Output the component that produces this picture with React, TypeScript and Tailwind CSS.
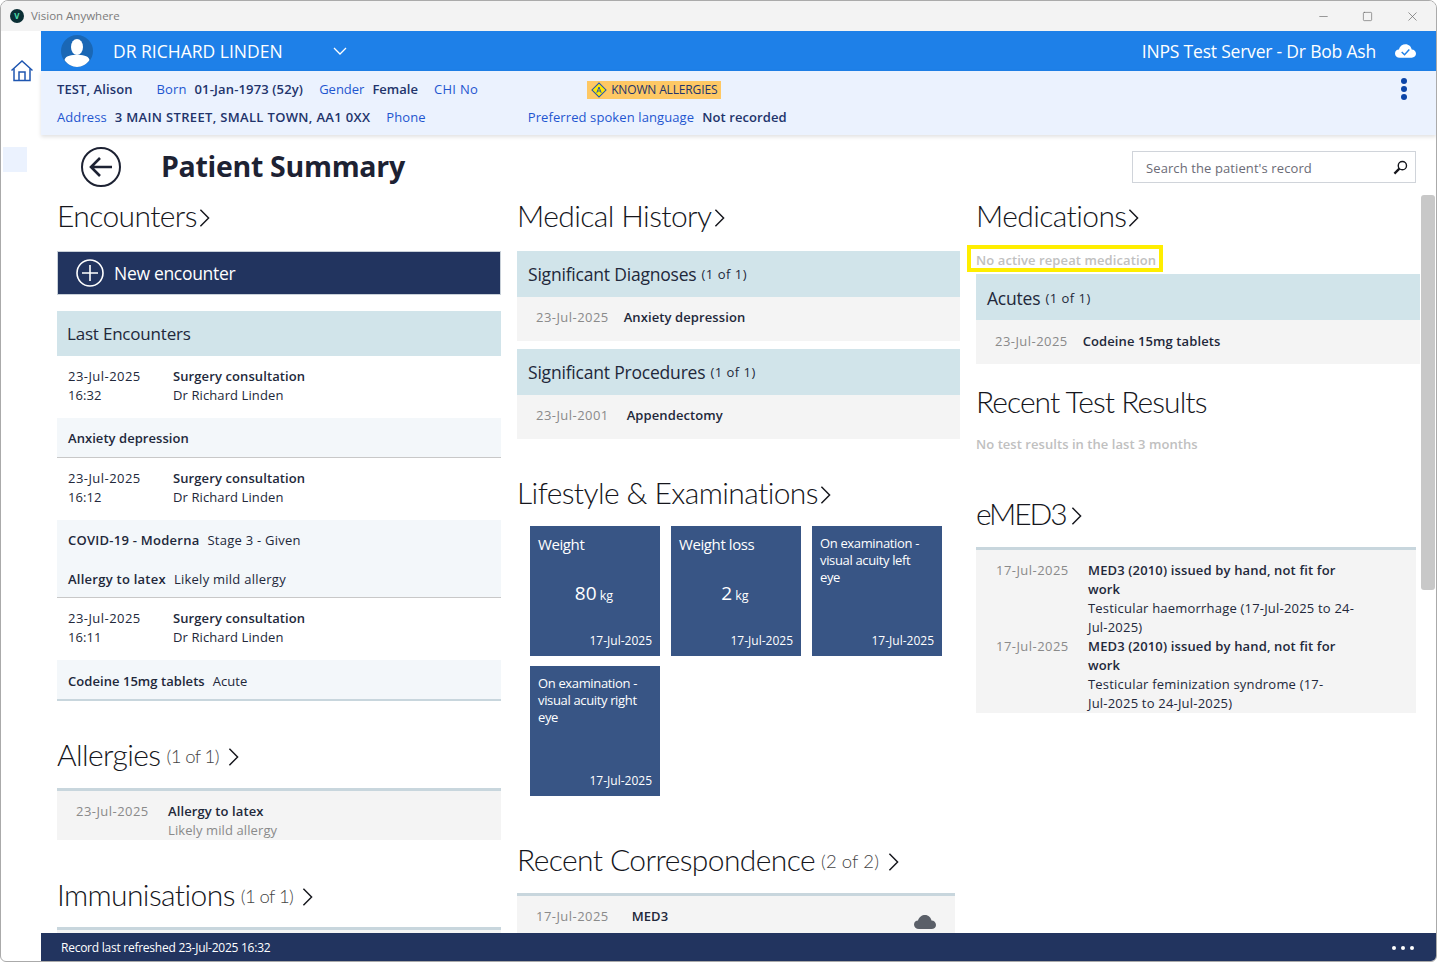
import { Minus, Square, X } from "lucide-react";

const body = "font-['Open_Sans','Liberation_Sans',sans-serif] tracking-[0.1px]";
const heading = "font-['Lato','Open_Sans',sans-serif] font-light text-[30px] leading-[40px] tracking-[-0.6px] text-[#15161c]";
const dateText = "tracking-[0.45px] text-[#8a8a8a]";

function Chevron({ className = "" }: { className?: string }) {
  return (
    <svg viewBox="0 0 12 22" className={"inline-block h-[20px] w-[11px] " + className} fill="none" stroke="#15161c" strokeWidth="1.6">
      <path d="M1.5 2 L10.5 11 L1.5 20" />
    </svg>
  );
}

function SectionTitle({ title, count, chevron = true, titleClass = "", countClass = "" }: { title: string; count?: string; chevron?: boolean; titleClass?: string; countClass?: string }) {
  return (
    <div className={heading + " flex h-[40px] items-center whitespace-nowrap"}>
      <span className={"-mt-[3px] " + titleClass}>{title}</span>
      {count && <span className={"ml-[6px] mt-[2px] text-[18.5px] text-[#444] " + countClass}>{count}</span>}
      {chevron && <Chevron className={count ? "ml-[9px] mt-[3px]" : "ml-[2px] mt-[3px]"} />}
    </div>
  );
}

function PanelHeader({ title, count, className = "pt-[1px]" }: { title: string; count?: string; className?: string }) {
  return (
    <div className={"flex h-[46px] items-center bg-[#d1e4ea] px-[11px] text-[#22283a] " + className}>
      <span className="text-[17.5px] tracking-[-0.2px]">{title}</span>
      {count && <span className="ml-[5px] mt-[1px] text-[13px] tracking-[0.5px]">{count}</span>}
    </div>
  );
}

function DateRow({ date, text, gap, className = "pb-[2px]" }: { date: string; text: string; gap: string; className?: string }) {
  return (
    <div className={"flex h-[44px] items-center bg-[#f4f4f4] pl-[19px] text-[13px] " + className}>
      <span className={dateText}>{date}</span>
      <span className={"font-semibold text-[#22283a] " + gap}>{text}</span>
    </div>
  );
}

function EncounterRow({ time, date = "23-Jul-2025" }: { time: string; date?: string }) {
  return (
    <div className="flex h-[62px] bg-white pl-[11px] pt-[11px] text-[13px] leading-[19px] text-[#22283a]">
      <div className="w-[105px]">
        <div className="tracking-[0.45px]">{date}</div>
        <div>{time}</div>
      </div>
      <div>
        <div className="font-semibold">Surgery consultation</div>
        <div>Dr Richard Linden</div>
      </div>
    </div>
  );
}

function Band({ lines, last }: { lines: [string, string?][]; last?: boolean }) {
  const multi = lines.length > 1;
  const line = multi ? "h-[39px] pt-[2px] last:h-[38px] last:pt-[4px]" : last ? "h-[39px] pt-[4px]" : "h-[39px] pt-[2px]";
  return (
    <div className={"bg-[#f3f7fa] px-[11px] text-[13px] text-[#22283a] " + (multi ? "tracking-[0.25px] " : "tracking-[0.05px] ") + (last ? "" : "border-b border-[#c8c8c8]")}>
      {lines.map(([bold, rest]) => (
        <div key={bold} className={"flex items-center " + line}>
          <span className="font-semibold">{bold}</span>
          {rest && <span className="ml-[8px]">{rest}</span>}
        </div>
      ))}
    </div>
  );
}

function Tile({ title, value, small }: { title: string; value?: string; small?: boolean }) {
  return (
    <div className="relative flex h-[130px] w-[130px] flex-col bg-[#385585] px-[8px] pb-[7px] text-white">
      {small ? (
        <div className="mt-[9px] h-[60px] pr-[8px] text-[13px] leading-[17px] tracking-[-0.35px]">{title}</div>
      ) : (
        <div className="mt-[8px] text-[15px] leading-[20px] tracking-[-0.4px]">{title}</div>
      )}
      {value && (
        <div className="mt-[25px] flex items-baseline justify-center pr-[2px]">
          <span className="text-[19px] leading-[28px]">{value}</span>
          <span className="ml-[3px] text-[12.5px]">kg</span>
        </div>
      )}
      <div className="mt-auto text-right text-[12px] leading-[16px] tracking-normal">17-Jul-2025</div>
    </div>
  );
}

function MedRow({ title, detail }: { title: string; detail: string[] }) {
  return (
    <div className="flex text-[13px] leading-[19px]">
      <span className={"w-[92px] shrink-0 " + dateText}>17-Jul-2025</span>
      <div className="w-[276px] text-[#22283a]">
        <div className="font-semibold tracking-[0.15px]">{title}</div>
        {detail.map((line) => (
          <div key={line} className="tracking-[0.2px]">{line}</div>
        ))}
      </div>
    </div>
  );
}

export default function App() {
  return (
    <div className={body + " flex h-[962px] w-[1437px] flex-col overflow-hidden rounded-t-[8px] rounded-b-[6px] border border-[#aaaaaa] bg-white"}>
      <div className="flex h-[30px] shrink-0 items-center bg-[#f3f3f3] pl-[9px] pr-[16px]">
        <div className="flex h-[14px] w-[14px] items-center justify-center rounded-full bg-[#0b2f35] text-[8px] font-bold leading-none text-[#4fe0b0]">V</div>
        <span className="ml-[7px] text-[11.5px] tracking-normal text-[#7b7b7b]">Vision Anywhere</span>
        <div className="ml-auto flex items-center gap-[32px] text-[#666]">
          <Minus size={13} strokeWidth={1.2} />
          <Square size={11} strokeWidth={1.4} />
          <X size={15} strokeWidth={1.1} />
        </div>
      </div>

      <div className="flex min-h-0 flex-1">
        <div className="flex w-[40px] shrink-0 flex-col items-start">
          <svg viewBox="0 0 24 24" className="ml-[9px] mt-[28px] h-[24px] w-[24px]" fill="none" stroke="#1f56b0" strokeWidth="1.5">
            <path d="M1.5 11.5 L12 2 L22.5 11.5" />
            <path d="M4 9.5 V21.5 H20 V9.5" />
            <path d="M9 21.5 V13 H15 V21.5" />
          </svg>
          <div className="ml-[2px] mt-[64px] h-[25px] w-[24px] bg-[#ebf2fe]" />
        </div>

        <div className="flex min-w-0 flex-1 flex-col">
          <div className="flex h-[40px] shrink-0 items-center bg-[#1e80e8] pl-[20px] pr-[20px] text-white">
            <svg viewBox="0 0 32 32" className="h-[32px] w-[32px]">
              <circle cx="16" cy="16" r="16" fill="#1a67b5" />
              <ellipse cx="16" cy="12" rx="6" ry="8" fill="#fff" />
              <path d="M3.5 25 C5 20 11 20 16 20 C21 20 27 20 28.5 25 C26 29 21 32 16 32 C11 32 6 29 3.5 25 Z" fill="#fff" />
            </svg>
            <span className="ml-[20px] text-[17.5px] tracking-normal">DR RICHARD LINDEN</span>
            <svg viewBox="0 0 14 8" className="ml-[50px] h-[8px] w-[14px]" fill="none" stroke="#fff" strokeWidth="1.3">
              <path d="M1 1 L7 7 L13 1" />
            </svg>
            <span className="ml-auto text-[17.5px] tracking-[-0.2px]">INPS Test Server - Dr Bob Ash</span>
            <svg viewBox="0 0 22 14" className="ml-[19px] h-[14px] w-[21px]">
              <path d="M5 14 C2 14 0 12 0 9.5 C0 7 2 5.5 4 5.5 C5 2 8 0 11 0 C14.5 0 17 2.5 17.5 5.5 C20 5.5 22 7.5 22 10 C22 12.5 20 14 17.5 14 Z" fill="#fff" />
              <path d="M7 8 L10 11 L15 5.5" fill="none" stroke="#1e80e8" strokeWidth="1.5" />
            </svg>
          </div>

          <div className="flex h-[64px] shrink-0 bg-[#ebf2fe] pl-[16px] pr-[29px] text-[13px] text-[#1f56d0] shadow-[0_2px_4px_rgba(0,0,0,0.12)]">
            <div className="flex-1">
              <div className="mt-[9px] flex h-[20px] items-center whitespace-nowrap">
                <span className="font-semibold text-[#22346b]">TEST, Alison</span>
                <span className="ml-[24px]">Born</span>
                <span className="ml-[8px] font-semibold tracking-[0.15px] text-[#22346b]">01-Jan-1973 (52y)</span>
                <span className="ml-[16px] tracking-normal">Gender</span>
                <span className="ml-[8px] font-semibold tracking-normal text-[#22346b]">Female</span>
                <span className="ml-[16px] tracking-[0.3px]">CHI No</span>
                <div className="ml-[109px] flex h-[18px] items-center bg-[#fec864] px-[4px] text-[12px] font-medium tracking-[-0.15px] text-[#22346b]">
                  <svg viewBox="0 0 16 16" className="h-[16px] w-[16px]">
                    <rect x="3" y="3" width="10" height="10" transform="rotate(45 8 8)" fill="#ffe600" stroke="#1f56b0" />
                    <path d="M5.8 10.8 L8 5 L10.2 10.8 M6.6 9 H9.4" fill="none" stroke="#1f56b0" strokeWidth="1" />
                  </svg>
                  <span className="ml-[4px]">KNOWN ALLERGIES</span>
                </div>
              </div>
              <div className="mt-[8px] flex h-[20px] items-center whitespace-nowrap">
                <span>Address</span>
                <span className="ml-[8px] font-semibold tracking-[0.33px] text-[#22346b]">3 MAIN STREET, SMALL TOWN, AA1 0XX</span>
                <span className="ml-[16px]">Phone</span>
                <span className="ml-[102px]">Preferred spoken language</span>
                <span className="ml-[8px] font-semibold text-[#22346b]">Not recorded</span>
              </div>
            </div>
            <div className="mt-[7px] flex flex-col gap-[2px]">
              <span className="h-[6px] w-[6px] rounded-full bg-[#0b45a8]" />
              <span className="h-[6px] w-[6px] rounded-full bg-[#0b45a8]" />
              <span className="h-[6px] w-[6px] rounded-full bg-[#0b45a8]" />
            </div>
          </div>

          <div className="flex h-[60px] shrink-0 items-start pr-[20px]">
            <svg viewBox="0 0 40 40" className="ml-[40px] mt-[12px] h-[40px] w-[40px]" fill="none" stroke="#1d2233" strokeWidth="2">
              <circle cx="20" cy="20" r="19" />
              <path d="M31 20 H10 M19 11 L10 20 L19 29" strokeWidth="2.6" />
            </svg>
            <h1 className="ml-[40px] mt-[12px] text-[28.5px] font-bold leading-[38px] tracking-[-0.3px] text-[#1d2233]">Patient Summary</h1>
            <div className="ml-auto mt-[16px] flex h-[32px] w-[284px] items-center border border-[#d0d4da] pl-[13px] pr-[7px] pt-[3px] text-[13px] tracking-[0.1px] text-[#6b6b76]">
              <span>Search the patient's record</span>
              <svg viewBox="0 0 16 16" className="ml-auto -mt-[3px] h-[15px] w-[15px]" fill="none" stroke="#15161c">
                <circle cx="10" cy="6" r="4.4" strokeWidth="1.5" />
                <path d="M6.8 9.2 L1.5 14.5" strokeWidth="2.4" />
              </svg>
            </div>
          </div>

          <div className="relative min-h-0 flex-1 overflow-hidden">
            <div className="flex pl-[16px] pt-[1px]">
              <div className="w-[444px] shrink-0">
                <SectionTitle title="Encounters" />
                <div className="mt-[15px] flex h-[44px] items-center border border-[#c8d0d8] bg-[#22345f] pl-[18px] text-[17.5px] tracking-[-0.3px] text-white">
                  <svg viewBox="0 0 28 28" className="h-[28px] w-[28px]" fill="none" stroke="#fff" strokeWidth="1.6">
                    <circle cx="14" cy="14" r="13" />
                    <path d="M14 6 V22 M6 14 H22" />
                  </svg>
                  <span className="ml-[10px]">New encounter</span>
                </div>
                <div className="mt-[16px] border-b-2 border-[#c8d6dd]">
                  <div className="flex h-[45px] items-center bg-[#d1e4ea] px-[10px] text-[17px] tracking-[-0.2px] text-[#22283a]">Last Encounters</div>
                  <EncounterRow time="16:32" />
                  <Band lines={[["Anxiety depression"]]} />
                  <EncounterRow time="16:12" />
                  <Band lines={[["COVID-19 - Moderna", "Stage 3 - Given"], ["Allergy to latex", "Likely mild allergy"]]} />
                  <EncounterRow time="16:11" />
                  <Band lines={[["Codeine 15mg tablets", "Acute"]]} last />
                </div>
                <div className="mt-[34px]">
                  <SectionTitle title="Allergies" count="(1 of 1)" />
                </div>
                <div className="mt-[13px] h-[52px] border-t-[3px] border-[#c8d6dd] bg-[#f4f4f4] pl-[19px] pt-[11px] text-[13px] leading-[19px]">
                  <div className="flex">
                    <span className={"w-[92px] " + dateText}>23-Jul-2025</span>
                    <div>
                      <div className="font-semibold text-[#22283a]">Allergy to latex</div>
                      <div className="text-[#8a8a8a]">Likely mild allergy</div>
                    </div>
                  </div>
                </div>
                <div className="mt-[35px]">
                  <SectionTitle title="Immunisations" count="(1 of 1)" />
                </div>
                <div className="mt-[12px] h-[20px] border-t-[3px] border-[#c8d6dd] bg-[#f4f4f4]" />
              </div>

              <div className="ml-[16px] w-[443px] shrink-0">
                <SectionTitle title="Medical History" />
                <div className="mt-[15px]">
                  <PanelHeader title="Significant Diagnoses" count="(1 of 1)" />
                  <DateRow date="23-Jul-2025" text="Anxiety depression" gap="ml-[15px]" />
                </div>
                <div className="mt-[8px]">
                  <PanelHeader title="Significant Procedures" count="(1 of 1)" />
                  <DateRow date="23-Jul-2001" text="Appendectomy" gap="ml-[18px]" />
                </div>
                <div className="mt-[34px]">
                  <SectionTitle title="Lifestyle & Examinations" />
                </div>
                <div className="mt-[13px] grid grid-cols-[130px_130px_130px] gap-x-[11px] gap-y-[10px] pl-[13px]">
                  <Tile title="Weight" value="80" />
                  <Tile title="Weight loss" value="2" />
                  <Tile title="On examination - visual acuity left eye" small />
                  <Tile title="On examination - visual acuity right eye" small />
                </div>
                <div className="mt-[44px]">
                  <SectionTitle title="Recent Correspondence" count="(2 of 2)" countClass="tracking-[0.1px]" />
                </div>
                <div className="mt-[13px] flex h-[60px] w-[438px] items-start border-t-[3px] border-[#c8d6dd] bg-[#f4f4f4] pl-[19px] pt-[11px] text-[13px]">
                  <span className={dateText}>17-Jul-2025</span>
                  <span className="ml-[23px] font-semibold text-[#22283a]">MED3</span>
                  <svg viewBox="0 0 22 14" className="ml-auto mr-[19px] mt-[8px] h-[14px] w-[22px]">
                    <path d="M5 14 C2 14 0 12 0 9.5 C0 7 2 5.5 4 5.5 C5 2 8 0 11 0 C14.5 0 17 2.5 17.5 5.5 C20 5.5 22 7.5 22 10 C22 12.5 20 14 17.5 14 Z" fill="#5a5f68" />
                  </svg>
                </div>
              </div>

              <div className="ml-[16px] w-[444px] shrink-0">
                <SectionTitle title="Medications" />
                <div className="-ml-[9px] mt-[9px] h-[27px] w-[196px] whitespace-nowrap border-[4px] border-[#ffee00] pl-[5px] pt-[2px] text-[13px] font-semibold leading-[19px] text-[#c0c0c0]">No active repeat medication</div>
                <div className="mt-[2px]">
                  <PanelHeader title="Acutes" count="(1 of 1)" className="pt-[3px]" />
                  <DateRow date="23-Jul-2025" text="Codeine 15mg tablets" gap="ml-[15px]" className="" />
                </div>
                <div className="mt-[18px]">
                  <SectionTitle title="Recent Test Results" chevron={false} titleClass="tracking-[-0.95px]" />
                </div>
                <div className="mt-[13px] text-[13px] font-semibold leading-[19px] tracking-[0.05px] text-[#c0c0c0]">No test results in the last 3 months</div>
                <div className="mt-[40px]">
                  <SectionTitle title="eMED3" titleClass="mr-[3px] tracking-[-2.1px]" />
                </div>
                <div className="mt-[13px] h-[166px] w-[440px] border-t-[3px] border-[#c8d6dd] bg-[#f4f4f4] pl-[20px] pt-[11px]">
                  <MedRow title="MED3 (2010) issued by hand, not fit for work" detail={["Testicular haemorrhage (17-Jul-2025 to 24-", "Jul-2025)"]} />
                  <MedRow title="MED3 (2010) issued by hand, not fit for work" detail={["Testicular feminization syndrome (17-", "Jul-2025 to 24-Jul-2025)"]} />
                </div>
              </div>
            </div>
            <div className="absolute right-[1px] top-[0px] h-[395px] w-[14px] rounded-[3px] bg-[#c8c8c8]" />
          </div>

          <div className="flex h-[28px] shrink-0 items-center bg-[#22345f] pl-[20px] pr-[22px] pt-[1px] text-[12px] tracking-[-0.25px] text-white">
            <span>Record last refreshed 23-Jul-2025 16:32</span>
            <div className="ml-auto flex gap-[5px]">
              <span className="h-[4px] w-[4px] rounded-full bg-white" />
              <span className="h-[4px] w-[4px] rounded-full bg-white" />
              <span className="h-[4px] w-[4px] rounded-full bg-white" />
            </div>
          </div>
        </div>
      </div>
    </div>
  );
}
